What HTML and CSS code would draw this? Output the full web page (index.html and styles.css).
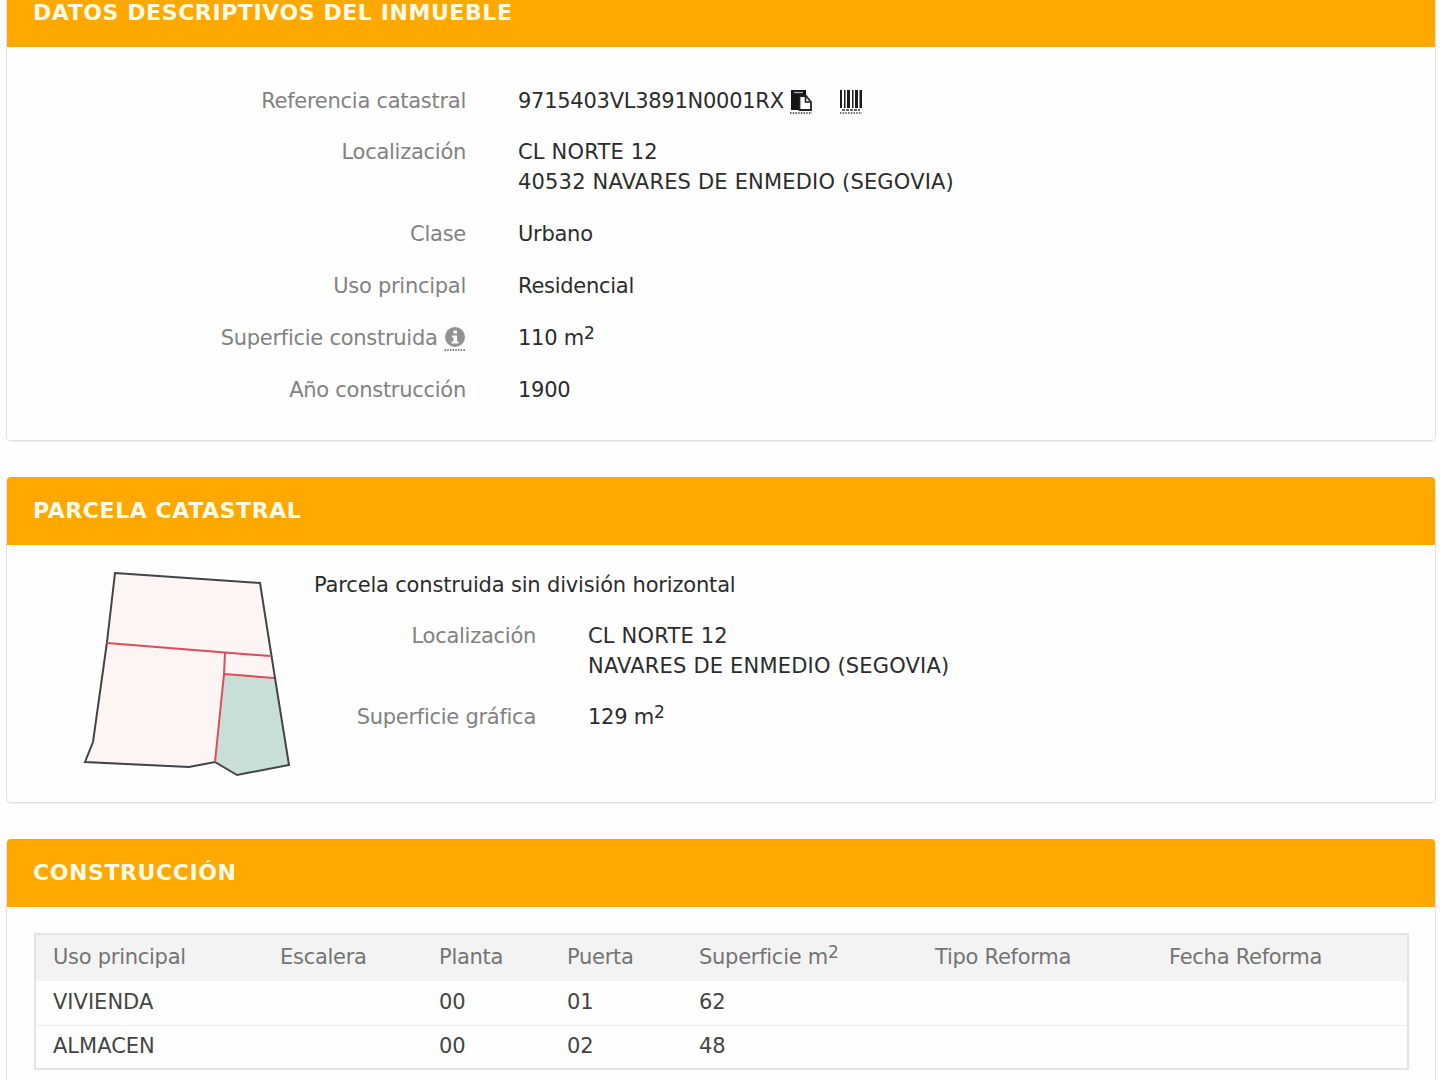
FILE: index.html
```html
<!DOCTYPE html>
<html lang="es">
<head>
  <meta charset="UTF-8">
  <meta name="viewport" content="width=device-width, initial-scale=1.0">
  <title>Consulta catastral</title>
  <link rel="stylesheet" href="styles.css">
</head>
<body>
<div class="container">

  <section class="panel inmueble">
    <h2 class="panel-heading">DATOS DESCRIPTIVOS DEL INMUEBLE</h2>
    <div class="panel-body">
      <div class="row">
        <span class="label">Referencia catastral</span>
        <span class="value">9715403VL3891N0001RX
          <svg class="icon icon-copy" viewBox="0 0 22 24">
            <path d="M1 0h15v5h-6v15H1z" fill="#151518"/>
            <path d="M4 2.5h9" stroke="#aaa" stroke-width="1.4"/>
            <path d="M9.5 6h6.5l5 6v8H9.5z" fill="#fff" stroke="#222" stroke-width="1.8"/>
            <path d="M15.5 6v6h5.5" fill="none" stroke="#222" stroke-width="1.6"/>
            <path d="M0 23h22" stroke="#333" stroke-width="1.5" stroke-dasharray="1.5 1.2"/>
          </svg>
          <svg class="icon icon-barcode" viewBox="0 0 22 24">
            <path d="M0 0h2v18H0zM4 0h1.5v18H4zM7 0h3v18H7zM12 0h1.5v18H12zM15 0h3v18h-3zM19.5 0H22v18h-2.5z" fill="#1c1c1e"/>
            <path d="M2 20h18" stroke="#333" stroke-width="1.5" stroke-dasharray="3 1"/>
            <path d="M0 23h22" stroke="#444" stroke-width="1.5" stroke-dasharray="1.5 1.2"/>
          </svg>
        </span>
      </div>
      <div class="row">
        <span class="label">Localización</span>
        <span class="value direccion">CL NORTE 12<br>40532 NAVARES DE ENMEDIO (SEGOVIA)</span>
      </div>
      <div class="row">
        <span class="label">Clase</span>
        <span class="value">Urbano</span>
      </div>
      <div class="row">
        <span class="label">Uso principal</span>
        <span class="value">Residencial</span>
      </div>
      <div class="row">
        <span class="label">Superficie construida
          <svg class="icon icon-info" viewBox="0 0 22 24">
            <circle cx="11" cy="10" r="10" fill="#929292"/>
            <path d="M9.5 3.5h3.5v3H9.500zM8 8.5h5v6h1.5v2H7.500v-2H9.500v-4H8z" fill="#fff"/>
            <path d="M0.5 23h21" stroke="#555" stroke-width="1.5" stroke-dasharray="1.5 1.2"/>
          </svg></span>
        <span class="value">110 m<sup>2</sup></span>
      </div>
      <div class="row">
        <span class="label">Año construcción</span>
        <span class="value">1900</span>
      </div>
    </div>
  </section>

  <section class="panel parcela">
    <h2 class="panel-heading">PARCELA CATASTRAL</h2>
    <div class="panel-body">
      <svg class="croquis" viewBox="0 0 210 208">
        <path d="M33 4L178 14L194 109L143 105L134 193L107 198L3 193L11 173Z" fill="#fdf4f4"/>
        <path d="M142 105L193 109L207 196L155 206L133 193Z" fill="#c8dfd7"/>
        <path d="M33 4L178 14L193 109L207 196L155 206L133 193L107 198L3 193L11 173L25 73Z" fill="none" stroke="#444" stroke-width="2"/>
        <path d="M25 74L188 87M143 84L142 105L133 193M142 105L192 109" fill="none" stroke="#e04a5a" stroke-width="2"/>
      </svg>
      <div class="parcela-datos">
        <p class="parcela-tipo">Parcela construida sin división horizontal</p>
        <div class="row">
          <span class="label">Localización</span>
          <span class="value direccion">CL NORTE 12<br>NAVARES DE ENMEDIO (SEGOVIA)</span>
        </div>
        <div class="row">
          <span class="label">Superficie gráfica</span>
          <span class="value">129 m<sup>2</sup></span>
        </div>
      </div>
    </div>
  </section>

  <section class="panel construccion">
    <h2 class="panel-heading">CONSTRUCCIÓN</h2>
    <div class="panel-body">
      <table class="tabla">
        <colgroup>
          <col class="c-uso"><col class="c-escalera"><col class="c-planta"><col class="c-puerta"><col class="c-superficie"><col class="c-tipo"><col>
        </colgroup>
        <thead>
          <tr>
            <th>Uso principal</th>
            <th>Escalera</th>
            <th>Planta</th>
            <th>Puerta</th>
            <th>Superficie m<sup>2</sup></th>
            <th>Tipo Reforma</th>
            <th>Fecha Reforma</th>
          </tr>
        </thead>
        <tbody>
          <tr>
            <td>VIVIENDA</td><td></td><td>00</td><td>01</td><td>62</td><td></td><td></td>
          </tr>
          <tr>
            <td>ALMACEN</td><td></td><td>00</td><td>02</td><td>48</td><td></td><td></td>
          </tr>
        </tbody>
      </table>
    </div>
  </section>

</div>
</body>
</html>
```

FILE: styles.css
```css
* {
  box-sizing: border-box;
}
body {
  margin: 0;
  background: #fefefe;
  color: #2c2c2c;
  font-family: Verdana, "DejaVu Sans", sans-serif;
  font-size: 21px;
  line-height: 29.5px;
  letter-spacing: -0.27px;
}
.container {
  height: 1080px;
  padding: 0 4px 0 6px;
  overflow: hidden;
}
.panel {
  border: 1px solid #e2e2e4;
  border-top: none;
  border-radius: 5px;
  margin-bottom: 36px;
  background: #fefefe;
  box-shadow: 0 1px 1px rgba(0,0,0,0.06);
}
.inmueble {
  height: 462px;
  margin-top: -21px;
}
.parcela {
  height: 326px;
}
.construccion {
  height: 241px;
  margin-bottom: 0;
  border-bottom: none;
  border-radius: 5px 5px 0 0;
}
.panel-heading {
  margin: 0;
  height: 68px;
  padding: 0 26px;
  line-height: 67px;
  font-size: 22px;
  font-weight: bold;
  letter-spacing: 0.58px;
  color: #fffbe8;
  background: #ffa800;
  border-radius: 4px 4px 0 0;
}
.inmueble .panel-heading {
  line-height: 68px;
}
.row {
  display: flex;
  margin-bottom: 22.4px;
}
.label {
  text-align: right;
  color: #828282;
}
.value {
  white-space: nowrap;
}
.direccion {
  letter-spacing: 0.18px;
}
sup {
  font-size: 17px;
  line-height: 0;
  vertical-align: 6px;
}
.icon {
  width: 22px;
  height: 24px;
  vertical-align: -6px;
}
.icon-barcode {
  margin-left: 21px;
}

.inmueble .panel-body {
  padding-top: 39.6px;
}
.inmueble .label {
  width: 459px;
  margin-right: 52px;
}

.parcela .panel-body {
  display: flex;
  padding: 24px 0 0 75px;
}
.croquis {
  width: 210px;
  height: 208px;
}
.parcela-datos {
  margin-left: 22px;
  padding-top: 2px;
}
.parcela-tipo {
  margin: 0 0 21.5px;
  letter-spacing: -0.17px;
}
.parcela .label {
  width: 222px;
  margin-right: 52px;
}

.construccion .panel-body {
  padding: 26px 26px 0 27px;
}
.tabla {
  width: 100%;
  table-layout: fixed;
  border-collapse: collapse;
  border: 2px solid #e4e4e4;
  color: #444;
}
.tabla th,
.tabla td {
  padding: 0 0 0 18px;
  height: 44px;
  text-align: left;
  font-weight: normal;
  white-space: nowrap;
}
.tabla th {
  height: 47px;
  background: #f3f3f3;
  color: #747474;
}
.tabla th:first-child,
.tabla td:first-child {
  padding-left: 17px;
}
.tabla td {
  letter-spacing: 0;
}
.tabla tbody tr + tr td {
  border-top: 1px solid #eee;
}
.c-uso { width: 227px; }
.c-escalera { width: 159px; }
.c-planta { width: 128px; }
.c-puerta { width: 132px; }
.c-superficie { width: 236px; }
.c-tipo { width: 234px; }
```
